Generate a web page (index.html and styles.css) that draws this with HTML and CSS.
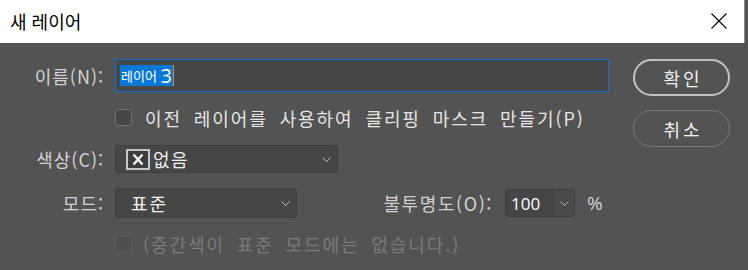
FILE: index.html
```html
<!DOCTYPE html>
<html lang="ko">
<head>
<meta charset="utf-8">
<title>새 레이어</title>
<link rel="stylesheet" href="styles.css">
</head>
<body>
<div class="dialog">
  <div class="titlebar">
    <span class="title">새 레이어</span>
    <svg class="close" width="16" height="16" viewBox="0 0 16 16"><path d="M0.5 0.5 L15.5 15.5 M15.5 0.5 L0.5 15.5" stroke="#000" stroke-width="1.1" fill="none"/></svg>
  </div>
  <div class="body">
    <div class="form">
      <div class="row row-name">
        <label class="label">이름(N):</label>
        <div class="name-input"><span class="sel"><span class="sel-ko">레이어&nbsp;</span><span class="sel-num">3</span></span><span class="caret"></span></div>
      </div>
      <div class="row row-check">
        <span class="checkbox"></span>
        <span class="check-text">이전 레이어를 사용하여 클리핑 마스크 만들기(P)</span>
      </div>
      <div class="row row-color">
        <label class="label">색상(C):</label>
        <div class="select select-color">
          <svg class="swatch" width="24" height="21" viewBox="0 0 24 21"><rect x="1" y="1" width="22" height="19" fill="#3d3d3d" stroke="#c4c4c4" stroke-width="2"/><path d="M7.5 5.5 L16.5 15.5 M16.5 5.5 L7.5 15.5" stroke="#f2f2f2" stroke-width="2.4"/></svg>
          <span class="select-text">없음</span>
          <svg class="chev" width="9" height="5" viewBox="0 0 9 5"><path d="M0.5 0.5 L4.5 4.5 L8.5 0.5" stroke="#bdbdbd" fill="none"/></svg>
        </div>
      </div>
      <div class="row row-mode">
        <label class="label">모드:</label>
        <div class="select select-mode">
          <span class="select-text mode-text">표준</span>
          <svg class="chev" width="9" height="5" viewBox="0 0 9 5"><path d="M0.5 0.5 L4.5 4.5 L8.5 0.5" stroke="#bdbdbd" fill="none"/></svg>
        </div>
        <label class="label op-label">불투명도(O):</label>
        <div class="opacity">
          <span class="op-value">100</span>
          <span class="op-btn"><svg width="9" height="5" viewBox="0 0 9 5"><path d="M0.5 0.5 L4.5 4.5 L8.5 0.5" stroke="#bdbdbd" fill="none"/></svg></span>
        </div>
        <span class="pct">%</span>
      </div>
      <div class="row row-check row-disabled">
        <span class="checkbox disabled"></span>
        <span class="check-text disabled-text">(중간색이 표준 모드에는 없습니다.)</span>
      </div>
    </div>
    <div class="buttons">
      <button class="btn btn-default">확인</button>
      <button class="btn">취소</button>
    </div>
  </div>
</div>
</body>
</html>
```

FILE: styles.css
```css
html, body {
  margin: 0;
  padding: 0;
  background: #535353;
}
body {
  width: 748px;
  height: 270px;
  overflow: hidden;
  font-family: "Noto Sans CJK KR", "Noto Sans", sans-serif;
}
.dialog {
  width: 748px;
  height: 270px;
  background: #535353;
}
.titlebar {
  height: 43px;
  width: 745px;
  background: #fff;
  border-right: 1px solid #8a8a8a;
  box-sizing: border-box;
  display: flex;
  align-items: center;
  justify-content: space-between;
  padding: 0 17px 0 10px;
}
.title {
  font-size: 18px;
  color: #000;
  line-height: 1;
  margin-top: -1px;
}
.close {
  display: block;
  margin-top: -1px;
}
.body {
  display: flex;
  padding-top: 16px;
}
.form {
  display: flex;
  flex-direction: column;
  width: 609px;
}
.row {
  display: flex;
  align-items: center;
}
.label {
  width: 104px;
  margin-right: 11px;
  text-align: right;
  font-size: 18px;
  color: #d2d2d2;
  white-space: nowrap;
  letter-spacing: 1px;
  flex: none;
}
.row-name {
  height: 33px;
}
.name-input {
  width: 494px;
  height: 33px;
  box-sizing: border-box;
  border: 1px solid #1a6fd6;
  background: #474747;
  display: flex;
  align-items: center;
  padding-left: 4px;
}
.sel {
  background: #0a78d6;
  color: #fff;
  height: 21px;
  display: flex;
  align-items: center;
  padding: 0 1px 0 1px;
  white-space: pre;
}
.sel-ko {
  font-size: 13px;
}
.sel-num {
  font-family: "Open Sans", "Noto Sans", sans-serif;
  font-size: 20px;
}
.caret {
  width: 1px;
  height: 21px;
  background: #d98c4a;
}
.row-check {
  height: 17px;
  margin-top: 17px;
  padding-left: 115px;
}
.checkbox {
  width: 17px;
  height: 17px;
  box-sizing: border-box;
  border: 1.5px solid #717171;
  border-radius: 3px;
  background: #474747;
  flex: none;
}
.check-text {
  margin-left: 13px;
  font-size: 18px;
  color: #e6e6e6;
  letter-spacing: 1.9px;
  word-spacing: 5px;
  white-space: nowrap;
}
.row-color {
  height: 28px;
  margin-top: 19px;
}
.select {
  height: 28px;
  box-sizing: border-box;
  border: 1px solid #3e3e3e;
  border-radius: 3px;
  background: #464646;
  display: flex;
  align-items: center;
  position: relative;
  flex: none;
}
.select-color {
  width: 223px;
  padding-left: 10px;
}
.swatch {
  display: block;
  flex: none;
}
.select-text {
  font-size: 18px;
  color: #f0f0f0;
  margin-left: 3px;
  letter-spacing: 1.5px;
}
.chev {
  display: block;
  margin-left: auto;
  margin-right: 6px;
}
.row-mode {
  height: 30px;
  margin-top: 15px;
}
.select-mode {
  width: 182px;
  height: 30px;
  padding-left: 12px;
}
.mode-text {
  margin-left: 3px;
  letter-spacing: 2px;
}
.op-label {
  width: 112px;
  margin-left: 84px;
  margin-right: 12px;
  letter-spacing: 1.6px;
}
.opacity {
  width: 70px;
  height: 28px;
  box-sizing: border-box;
  border: 1px solid #3e3e3e;
  border-radius: 3px;
  background: #464646;
  display: flex;
  align-items: stretch;
  flex: none;
}
.op-value {
  width: 48px;
  box-sizing: border-box;
  padding-left: 5px;
  display: flex;
  align-items: center;
  font-family: "Open Sans", "Noto Sans", sans-serif;
  font-size: 17px;
  color: #fff;
  border-right: 1px solid #3a3a3a;
}
.op-btn {
  flex: 1;
  display: flex;
  align-items: center;
  justify-content: center;
  background: #4a4a4a;
}
.op-btn svg {
  display: block;
}
.pct {
  margin-left: 12px;
  font-family: "Open Sans", "Noto Sans", sans-serif;
  font-size: 19px;
  color: #d2d2d2;
}
.row-disabled {
  margin-top: 17px;
}
.checkbox.disabled {
  border-color: #595959;
  background: #4e4e4e;
}
.disabled-text {
  color: #7a7a7a;
  margin-left: 11px;
}
.buttons {
  display: flex;
  flex-direction: column;
  margin-left: 24px;
  gap: 14px;
}
.btn {
  width: 97px;
  height: 37px;
  border-radius: 19px;
  border: 1px solid #7a7a7a;
  background: transparent;
  color: #f0f0f0;
  font-family: "Noto Sans CJK KR", "Noto Sans", sans-serif;
  font-size: 18px;
  letter-spacing: 3px;
  text-indent: 3px;
  padding: 0;
  line-height: 1;
}
.btn-default {
  border: 2px solid #c2c2c2;
}
```
